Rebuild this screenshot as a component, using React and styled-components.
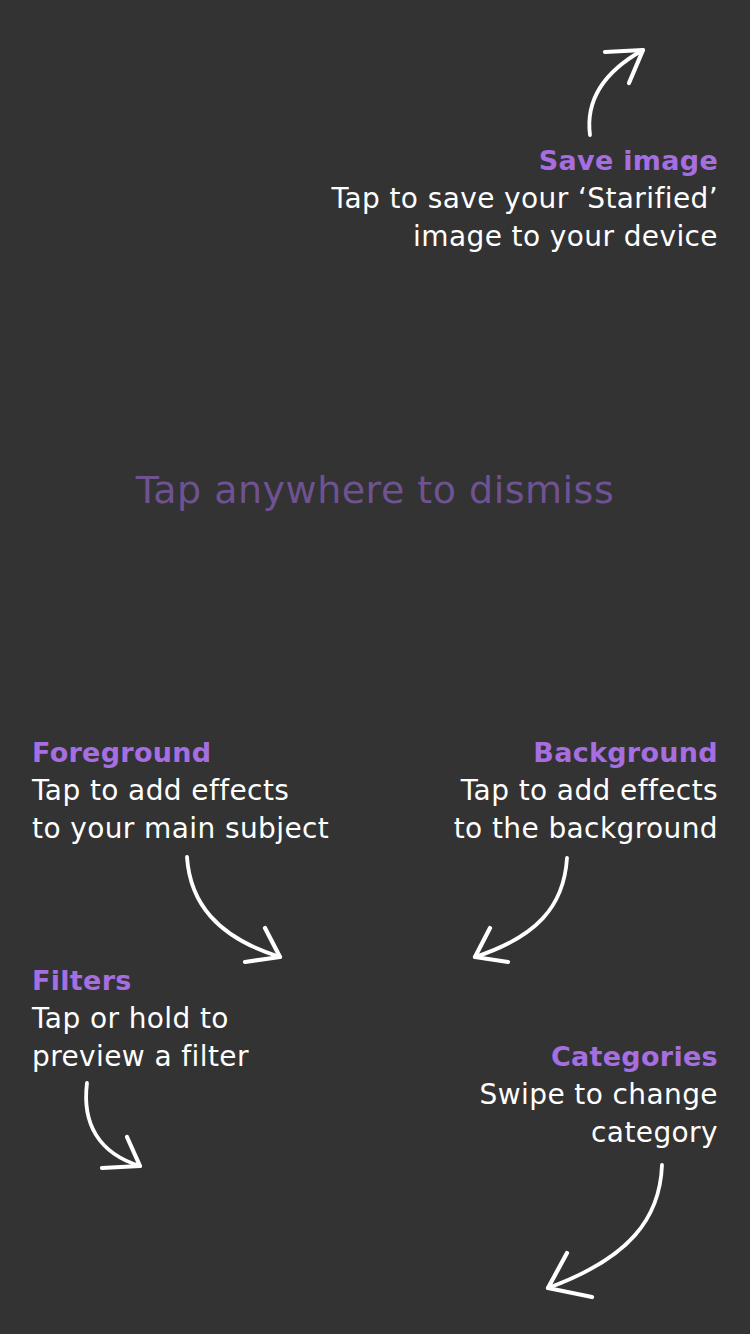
import React from 'react';
import styled, { createGlobalStyle } from 'styled-components';

const GlobalStyle = createGlobalStyle`
  html, body {
    margin: 0;
    padding: 0;
    background: #333333;
  }
  body {
    font-family: "DejaVu Sans", "Open Sans", sans-serif;
  }
`;

const Page = styled.div`
  width: 750px;
  height: 1334px;
  box-sizing: border-box;
  padding: 44px 32px 0;
  background: #333333;
  display: flex;
  flex-direction: column;
  overflow: hidden;
`;

const Hint = styled.div`
  display: flex;
  flex-direction: column;
  align-items: ${p => (p.$right ? 'flex-end' : 'flex-start')};
  text-align: ${p => (p.$right ? 'right' : 'left')};
  margin-top: ${p => p.$top || 0}px;
`;

const Title = styled.div`
  color: #a66ee0;
  font-weight: 700;
  font-size: 27px;
  line-height: 38px;
  letter-spacing: 0.3px;
`;

const Body = styled.div`
  color: #ffffff;
  font-size: 28px;
  line-height: 38px;
  letter-spacing: 0.4px;
`;

const Dismiss = styled.div`
  margin-top: 210px;
  text-align: center;
  color: #6f5292;
  font-size: 38px;
  line-height: 48px;
  letter-spacing: 0.5px;
`;

const Columns = styled.div`
  margin-top: 220px;
  display: grid;
  grid-template-columns: 1fr 1fr;
`;

const Column = styled.div`
  display: flex;
  flex-direction: column;
  align-items: ${p => (p.$right ? 'flex-end' : 'flex-start')};
`;

const ArrowSvg = styled.svg`
  display: block;
  overflow: visible;
  flex-shrink: 0;
  margin: ${p => p.$m};
`;

const Arrow = ({ w, h, d, head, m }) => (
  <ArrowSvg width={w} height={h} viewBox={`0 0 ${w} ${h}`} $m={m}>
    <path d={d} fill="none" stroke="#fff" strokeWidth="3.8" strokeLinecap="round" />
    <path d={head} fill="none" stroke="#fff" strokeWidth="4.2" strokeLinecap="round" strokeLinejoin="round" />
  </ArrowSvg>
);

export default function App() {
  return (
    <>
      <GlobalStyle />
      <Page>
        <Hint $right>
          <Arrow
            w={72}
            h={96}
            m="0 66px 2px 0"
            d="M10 91 C 6 60, 20 30, 63 6"
            head="M25 8 L63 6 L49 39"
          />
          <Title>Save image</Title>
          <Body>
            Tap to save your ‘Starified’
            <br />
            image to your device
          </Body>
        </Hint>

        <Dismiss>Tap anywhere to dismiss</Dismiss>

        <Columns>
          <Column>
            <Hint>
              <Title>Foreground</Title>
              <Body>
                Tap to add effects
                <br />
                to your main subject
              </Body>
            </Hint>
            <Arrow
              w={112}
              h={110}
              m="4px 0 0 144px"
              d="M11 5 C 14 50, 40 85, 104 105"
              head="M89 76 L104 105 L69 110"
            />
            <Hint>
              <Title>Filters</Title>
              <Body>
                Tap or hold to
                <br />
                preview a filter
              </Body>
            </Hint>
            <Arrow
              w={72}
              h={96}
              m="2px 0 0 46px"
              d="M9 5 C 4 45, 20 75, 62 88"
              head="M49 59 L62 88 L24 90"
            />
          </Column>
          <Column $right>
            <Hint $right>
              <Title>Background</Title>
              <Body>
                Tap to add effects
                <br />
                to the background
              </Body>
            </Hint>
            <Arrow
              w={112}
              h={116}
              m="4px 140px 0 0"
              d="M101 6 C 98 55, 70 85, 9 105"
              head="M24 76 L9 105 L42 110"
            />
            <Hint $right $top={70}>
              <Title>Categories</Title>
              <Body>
                Swipe to change
                <br />
                category
              </Body>
            </Hint>
            <Arrow
              w={130}
              h={146}
              m="6px 48px 0 0"
              d="M122 7 C 120 60, 90 100, 8 130"
              head="M27 95 L8 130 L52 139"
            />
          </Column>
        </Columns>
      </Page>
    </>
  );
}
